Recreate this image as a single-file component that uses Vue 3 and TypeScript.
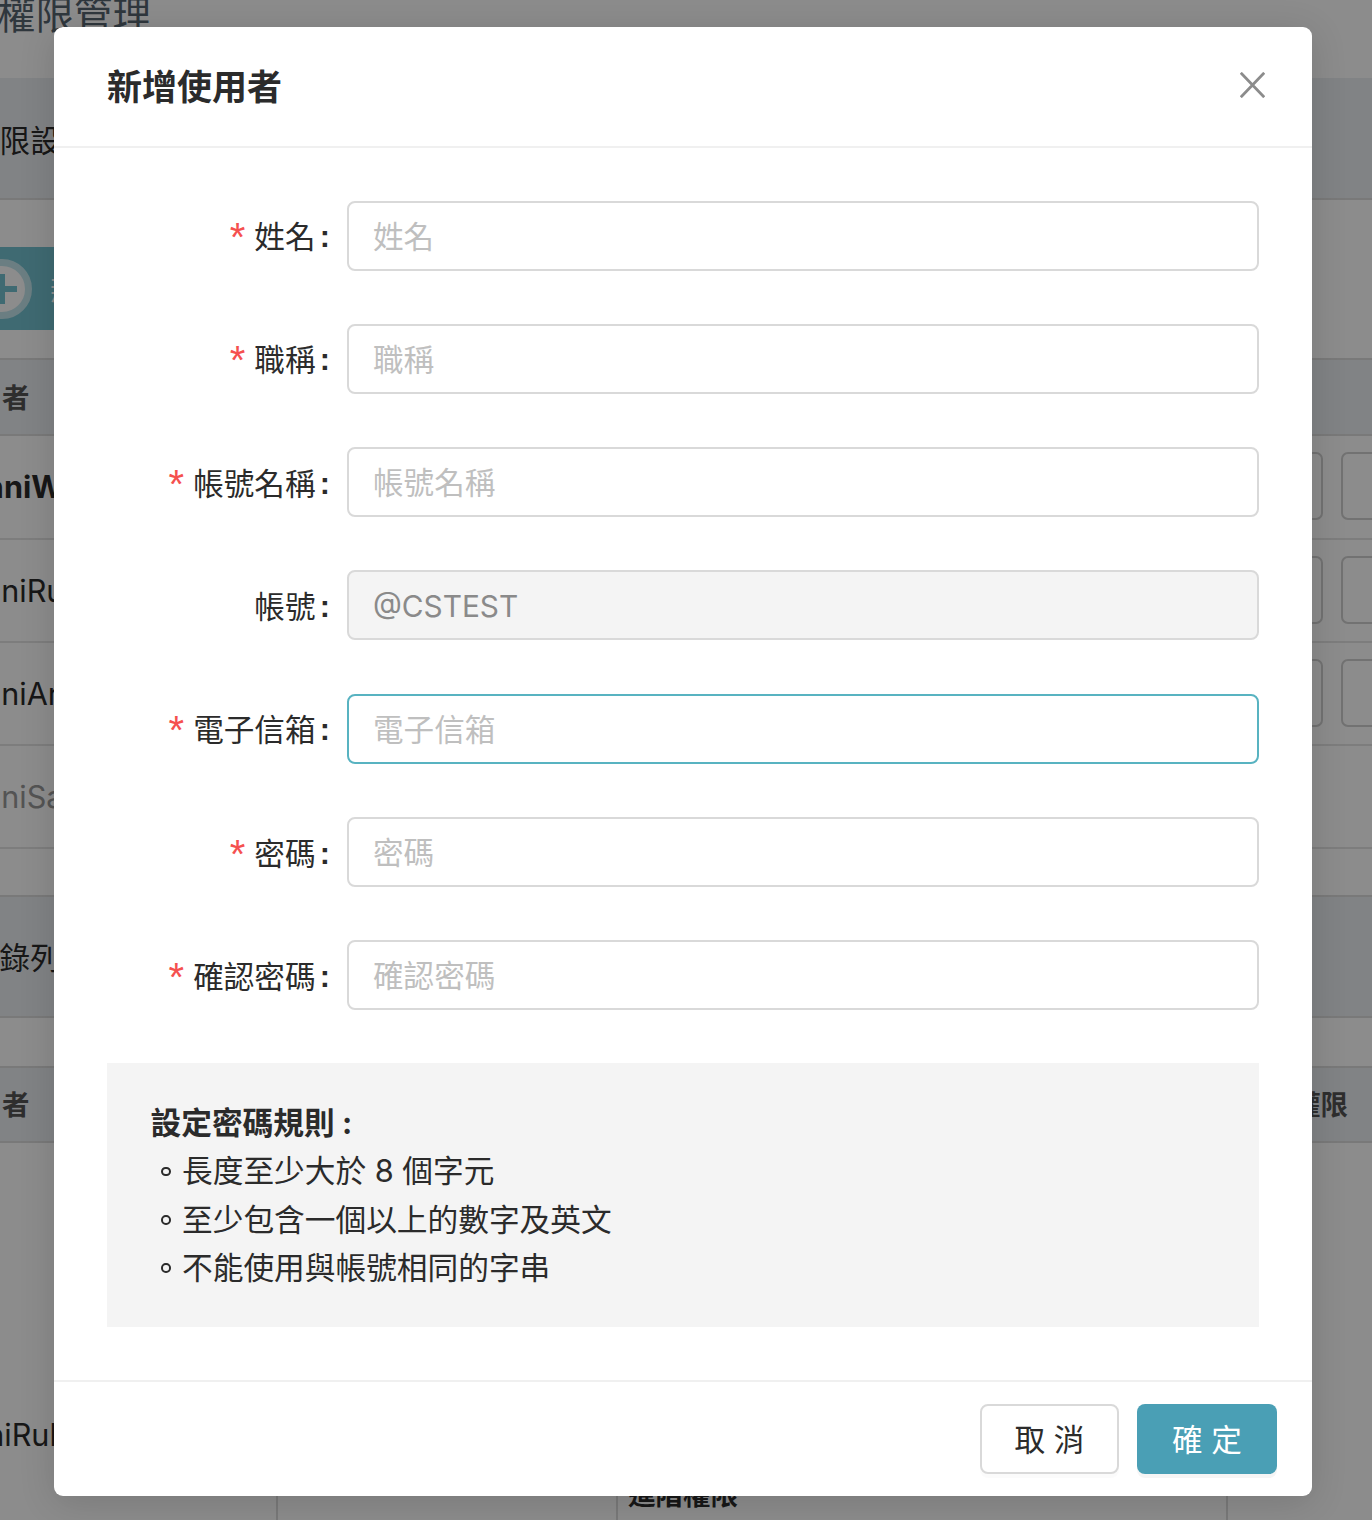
<script setup lang="ts">
interface Field {
  label: string
  required: boolean
  placeholder: string
  state?: 'disabled' | 'focus'
  value?: string
}

const fields: Field[] = [
  { label: '姓名', required: true, placeholder: '姓名' },
  { label: '職稱', required: true, placeholder: '職稱' },
  { label: '帳號名稱', required: true, placeholder: '帳號名稱' },
  { label: '帳號', required: false, placeholder: '', state: 'disabled', value: '@CSTEST' },
  { label: '電子信箱', required: true, placeholder: '電子信箱', state: 'focus' },
  { label: '密碼', required: true, placeholder: '密碼' },
  { label: '確認密碼', required: true, placeholder: '確認密碼' },
]

const rules = ['長度至少大於 8 個字元', '至少包含一個以上的數字及英文', '不能使用與帳號相同的字串']

const pageRows = [
  { name: 'AnniW', cls: 'bold' },
  { name: 'AnniRu', cls: '' },
  { name: 'AnniAr', cls: '' },
  { name: 'AnniSa', cls: 'faded' },
]
</script>

<template>
  <div class="stage">
    <div class="page">
      <div class="page-title"><span>權限管理</span></div>
      <div class="band section"><span>權限設定</span></div>
      <div class="tool">
        <div class="add-btn">
          <span class="add-icon"></span>
          <span class="add-text">新增</span>
        </div>
      </div>
      <div class="band thead"><span>使用者</span></div>
      <div v-for="r in pageRows" :key="r.name" class="row" :class="r.cls">
        <span class="row-name">{{ r.name }}</span>
        <div v-if="r.cls !== 'faded'" class="row-actions">
          <span class="ghost"></span>
          <span class="ghost"></span>
        </div>
      </div>
      <div class="spacer-a"></div>
      <div class="band section log"><span>記錄列表</span></div>
      <div class="spacer-b"></div>
      <div class="band thead split">
        <span>使用者</span>
        <span>權限</span>
      </div>
      <div class="log-body">
        <span class="log-name">AnniRul</span>
      </div>
      <div class="log-foot">
        <span class="cell"></span>
        <span class="cell"></span>
        <span class="cell"><b>進階權限</b></span>
        <span class="cell last"></span>
      </div>
    </div>

    <div class="mask"></div>

    <section class="modal">
      <header class="modal-head">
        <h2>新增使用者</h2>
        <svg class="close" viewBox="0 0 25 26" aria-hidden="true">
          <path d="M0.8 0.8 L24.2 25.2 M24.2 0.8 L0.8 25.2" />
        </svg>
      </header>

      <div class="modal-body">
        <form class="form" @submit.prevent>
          <div v-for="f in fields" :key="f.label" class="form-row">
            <label class="label">
              <span v-if="f.required" class="star">*</span>
              <span>{{ f.label }}</span>
              <span class="colon">:</span>
            </label>
            <div class="input" :class="f.state">
              <span v-if="f.value" class="value">{{ f.value }}</span>
              <span v-else class="ph">{{ f.placeholder }}</span>
            </div>
          </div>
        </form>

        <div class="rules">
          <div class="rules-title">設定密碼規則 :</div>
          <ul>
            <li v-for="r in rules" :key="r"><i class="ring"></i>{{ r }}</li>
          </ul>
        </div>
      </div>

      <footer class="modal-foot">
        <button class="btn" type="button">取 消</button>
        <button class="btn primary" type="button">確 定</button>
      </footer>
    </section>
  </div>
</template>

<style>
html,
body {
  margin: 0;
  padding: 0;
  background: #8c8c8c;
}
</style>

<style scoped>
.stage {
  position: relative;
  width: 1372px;
  height: 1520px;
  overflow: hidden;
  font-family: Inter, "Noto Sans CJK TC", sans-serif;
  color: #2b2b2b;
}

.page {
  display: flex;
  flex-direction: column;
  width: 1372px;
  height: 1520px;
  background: #fff;
}
.page > * {
  flex: none;
}

.page-title {
  height: 78px;
  background: #fff;
  overflow: hidden;
  white-space: nowrap;
  font-size: 38.5px;
  line-height: 30px;
  color: #56646f;
}
.page-title span {
  display: block;
  margin-top: 0;
  margin-left: -3px;
}

.band {
  display: flex;
  align-items: center;
  box-sizing: border-box;
  background: #eceef2;
  white-space: nowrap;
}

.section {
  height: 122px;
  padding-top: 2px;
  border-bottom: 2px solid #dcdcdc;
  font-size: 30.6px;
  color: #2b2b2b;
}
.section span {
  margin-left: -31px;
}

.tool {
  height: 158px;
  box-sizing: border-box;
  padding-top: 47px;
  background: #fff;
}
.add-btn {
  display: flex;
  align-items: center;
  gap: 18px;
  margin-left: -40px;
  width: 260px;
  height: 83px;
  box-sizing: border-box;
  padding-left: 12px;
  background: #73c1cf;
  color: #fff;
  font-size: 30.6px;
}
.add-icon {
  position: relative;
  flex: none;
  width: 60px;
  height: 60px;
  box-sizing: border-box;
  border: 7px solid #c4e6ed;
  border-radius: 50%;
  background: #fff;
}
.add-icon::before,
.add-icon::after {
  content: "";
  position: absolute;
  background: #73c1cf;
}
.add-icon::before {
  left: 8px;
  right: 8px;
  top: 20px;
  height: 6px;
}
.add-icon::after {
  top: 8px;
  bottom: 8px;
  left: 20px;
  width: 6px;
}

.thead {
  height: 78px;
  padding-bottom: 3px;
  border-top: 2px solid #dcdcdc;
  border-bottom: 2px solid #dcdcdc;
  font-size: 27.5px;
  font-weight: 700;
  color: #555;
}
.thead > span:first-child {
  margin-left: -53px;
}
.split {
  justify-content: space-between;
  height: 77px;
}
.split > span:last-child {
  margin-right: 24px;
}

.row {
  display: flex;
  align-items: center;
  justify-content: space-between;
  box-sizing: border-box;
  height: 103px;
  border-bottom: 2px solid #e4e4e4;
  background: #fff;
  font-size: 30.6px;
  white-space: nowrap;
  color: #2b2b2b;
}
.row-name {
  margin-left: -38px;
}
.bold {
  height: 103.5px;
  font-weight: 700;
}
.faded {
  color: #999;
}
.row-actions {
  display: flex;
  gap: 18px;
  margin-top: -1px;
  margin-right: -79px;
}
.ghost {
  width: 110px;
  height: 68px;
  box-sizing: border-box;
  border: 2px solid #cfcfcf;
  border-radius: 7px;
}

.spacer-a {
  height: 46.5px;
  background: #fff;
}
.log {
  height: 123px;
  padding-top: 0;
  padding-bottom: 2px;
  border-top: 2px solid #dcdcdc;
}
.spacer-b {
  height: 48px;
  background: #fff;
}

.page > .log-body {
  flex: 1;
  box-sizing: border-box;
  padding-top: 273px;
  background: #fff;
  font-size: 30.6px;
  white-space: nowrap;
}
.log-name {
  display: block;
  margin-left: -53px;
}

.log-foot {
  display: grid;
  grid-template-columns: 278px 340px 610px 1fr;
  height: 50px;
  background: #fff;
}
.cell {
  box-sizing: border-box;
  padding-left: 10px;
  border-right: 2px solid #dcdcdc;
  font-size: 27.5px;
  line-height: 50px;
  color: #2b2b2b;
  white-space: nowrap;
}
.last {
  border-right: 0;
}

.mask {
  position: absolute;
  inset: 0;
  background: rgba(0, 0, 0, 0.45);
}

.modal {
  position: absolute;
  left: 54px;
  top: 27px;
  display: flex;
  flex-direction: column;
  width: 1258px;
  height: 1469px;
  overflow: hidden;
  background: #fff;
  border-radius: 9px;
  box-shadow: 0 6px 36px rgba(0, 0, 0, 0.14);
}

.modal-head {
  flex: none;
  display: flex;
  align-items: center;
  justify-content: space-between;
  box-sizing: border-box;
  height: 121px;
  padding: 0 47px 3px 53px;
  border-bottom: 2px solid #f0f0f0;
}
.modal-head h2 {
  margin: 0;
  padding-top: 4px;
  font-size: 35px;
  font-weight: 700;
  line-height: 48px;
  color: #2b2b2b;
}
.close {
  width: 25px;
  height: 26px;
  fill: none;
  stroke: #8c8c8c;
  stroke-width: 2.8;
}

.modal-body {
  flex: 1;
  display: flex;
  flex-direction: column;
  padding: 52.55px 53px 0;
}

.form {
  display: flex;
  flex-direction: column;
  gap: 53.3px;
}
.form-row {
  display: flex;
  align-items: center;
  height: 70px;
}
.label {
  flex: none;
  display: flex;
  align-items: center;
  justify-content: flex-end;
  box-sizing: border-box;
  width: 240px;
  padding-top: 3px;
  font-size: 30.6px;
  line-height: 44px;
  color: #2b2b2b;
  white-space: nowrap;
}
.star {
  margin-right: 9px;
  color: #f5504f;
  font-family: "Liberation Sans", sans-serif;
  font-size: 40px;
}
.colon {
  position: relative;
  top: -1px;
  margin: 0 17px 0 4.3px;
  font-family: "Liberation Sans", sans-serif;
  font-weight: 700;
}

.input {
  flex: 1;
  display: flex;
  align-items: center;
  box-sizing: border-box;
  height: 70px;
  padding: 0 24px 2px;
  border: 2px solid #d9d9d9;
  border-radius: 8px;
  background: #fff;
  font-size: 30.6px;
}
.input.disabled {
  background: #f4f4f4;
}
.input.focus {
  border-color: #58b3c1;
}
.ph {
  color: #bfbfbf;
}
.value {
  padding-top: 4px;
  font-size: 29.8px;
  color: #8a8a8a;
}

.rules {
  margin-top: 52.8px;
  height: 264px;
  box-sizing: border-box;
  padding: 36px 44px 0 43.5px;
  background: #f4f4f4;
  font-size: 30.7px;
  line-height: 48.3px;
  color: #2b2b2b;
}
.rules-title {
  font-weight: 700;
}
.rules ul {
  margin: 0;
  padding: 0;
  list-style: none;
}
.rules li {
  display: flex;
  align-items: center;
  white-space: pre;
}
.ring {
  flex: none;
  width: 9.5px;
  height: 9.5px;
  box-sizing: border-box;
  margin: 0 11.5px 0 10.5px;
  border: 2px solid #2b2b2b;
  border-radius: 50%;
}

.modal-foot {
  flex: none;
  display: flex;
  justify-content: flex-end;
  gap: 18px;
  box-sizing: border-box;
  height: 116px;
  padding: 22px 35px 0 0;
  border-top: 2px solid #f0f0f0;
}
.btn {
  width: 139px;
  height: 70px;
  box-sizing: border-box;
  padding: 0 0 2px;
  border: 2px solid #d9d9d9;
  border-radius: 8px;
  background: #fff;
  color: #2b2b2b;
  font: inherit;
  font-size: 30.6px;
  box-shadow: 0 4px 0 rgba(0, 0, 0, 0.015);
}
.primary {
  width: 140px;
  border: 0;
  background: #4a9fb5;
  color: #fff;
  box-shadow: 0 4px 0 rgba(0, 0, 0, 0.04);
}
</style>
